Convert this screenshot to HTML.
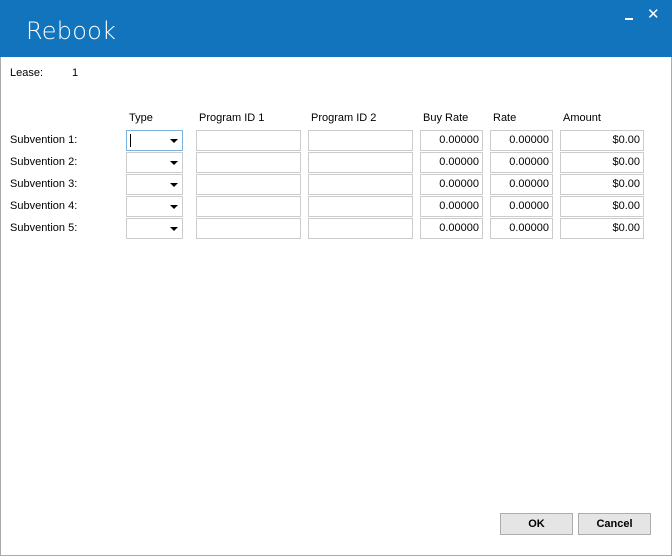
<!DOCTYPE html>
<html><head><style>
body{margin:0;width:672px;height:557px;background:#fff;font-family:"Liberation Sans",Arial,sans-serif;font-size:11px;color:#000;position:relative;overflow:hidden}
.hdr{position:absolute;left:0;top:0;width:672px;height:57px;background:#1174bd}
.ttl{position:absolute;left:26px;top:17px;color:#fff;font-size:24px;font-family:"DejaVu Sans","Liberation Sans",sans-serif;font-weight:300;letter-spacing:0.2px}
.frame{position:absolute;left:0;top:57px;width:670px;height:498px;border-right:1px solid #aaa;border-bottom:1px solid #aaa;border-left:1px solid #aaa}
.t{position:absolute;white-space:nowrap}
.in{position:absolute;height:19px;border:1px solid #ccc;box-sizing:border-box;height:21px;text-align:right;padding-right:3px;line-height:19px}
.dd{position:absolute;width:57px;height:21px;border:1px solid #ccc;box-sizing:border-box}
.dd:after{content:"";position:absolute;right:4px;top:8px;border-left:4px solid transparent;border-right:4px solid transparent;border-top:4px solid #000}
.btn{position:absolute;top:513px;width:73px;height:22px;box-sizing:border-box;border:1px solid #adadad;background:#e5e5e5;text-align:center;line-height:20px;font-weight:bold}
</style></head><body>
<div class="hdr"><div class="ttl">Rebook</div>
<div style="position:absolute;left:625px;top:18px;width:8px;height:2px;background:#fff"></div>
<div class="t" style="left:647px;top:5px;color:#fff;font-size:15px">✕</div></div>
<div class="frame"></div>
<div class="t" style="left:10px;top:67px">Lease:</div>
<div class="t" style="left:72px;top:67px">1</div>
<div class="t" style="left:129px;top:112px">Type</div>
<div class="t" style="left:199px;top:112px">Program ID 1</div>
<div class="t" style="left:311px;top:112px">Program ID 2</div>
<div class="t" style="left:423px;top:112px">Buy Rate</div>
<div class="t" style="left:493px;top:112px">Rate</div>
<div class="t" style="left:563px;top:112px">Amount</div>
<div id="rows"></div>
<script>
var h='';for(var i=0;i<5;i++){var y=130+i*22;
h+='<div class="t" style="left:10px;top:'+(y+4)+'px">Subvention '+(i+1)+':</div>';
h+='<div class="dd" style="left:126px;top:'+y+'px'+(i==0?';border-color:#7ab2e0':'')+'">'+(i==0?'<div style="position:absolute;left:3px;top:3px;width:1px;height:13px;background:#000"></div>':'')+'</div>';
h+='<div class="in" style="left:196px;top:'+y+'px;width:105px"></div>';
h+='<div class="in" style="left:308px;top:'+y+'px;width:105px"></div>';
h+='<div class="in" style="left:420px;top:'+y+'px;width:63px">0.00000</div>';
h+='<div class="in" style="left:490px;top:'+y+'px;width:63px">0.00000</div>';
h+='<div class="in" style="left:560px;top:'+y+'px;width:84px">$0.00</div>';}
document.getElementById('rows').innerHTML=h;
</script>
<div class="btn" style="left:500px">OK</div>
<div class="btn" style="left:578px">Cancel</div>
</body></html>
